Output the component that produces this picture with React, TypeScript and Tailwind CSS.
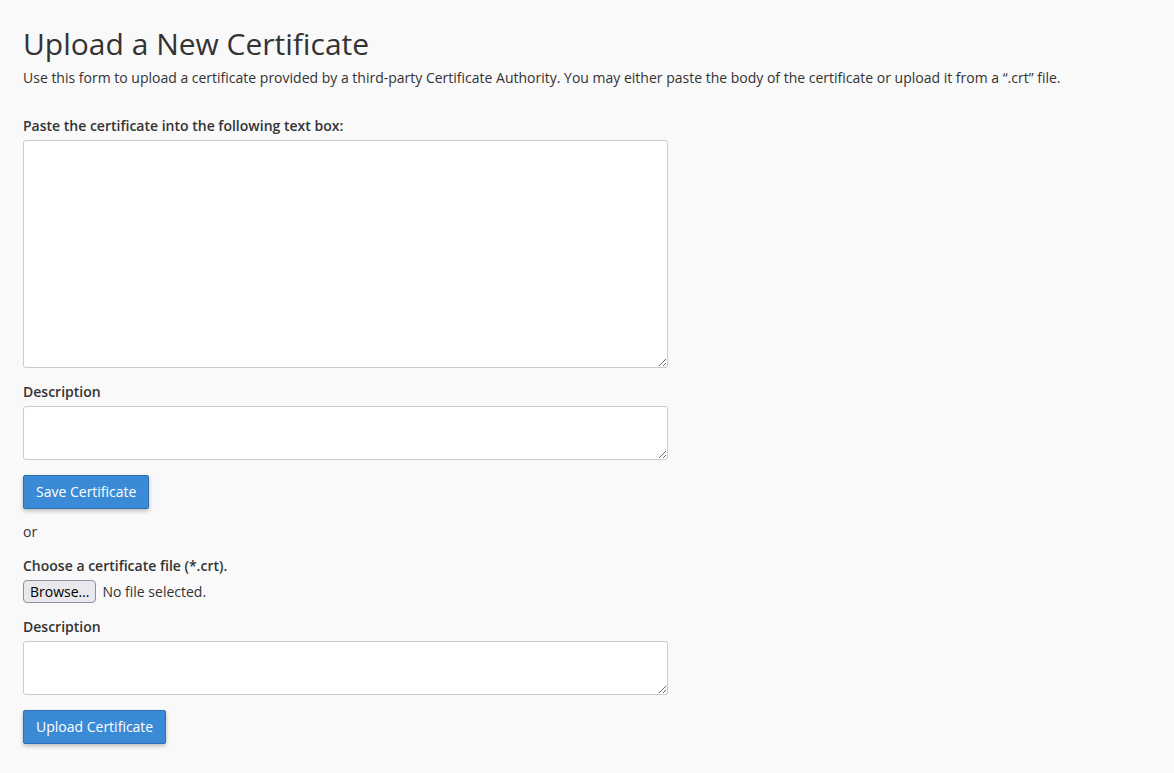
import React from "react";

const font = { fontFamily: '"Open Sans", "Noto Sans", sans-serif' };

function Label({ children }: { children: React.ReactNode }) {
  return <label className="block text-[14px] font-semibold text-[#333] leading-[20px] mb-[4px]">{children}</label>;
}

function PrimaryButton({ children }: { children: React.ReactNode }) {
  return (
    <button
      type="button"
      className="h-[34px] px-[12px] text-[14px] leading-[20px] pb-[1px] text-white bg-[#3a8ad6] border border-[#2c6fb2] rounded-[2px] shadow-[0_2px_4px_rgba(0,0,0,0.25)]"
    >
      {children}
    </button>
  );
}

export default function App() {
  return (
    <div className="min-h-screen bg-[#f9f9f9] text-[#333] px-[23px] pt-[24px] pb-[30px]" style={font}>
      <h1 className="text-[30px] leading-[40px] font-normal text-[#333]">Upload a New Certificate</h1>
      <p className="text-[14px] leading-[20px] mt-[4px]">
        Use this form to upload a certificate provided by a third-party Certificate Authority. You may either paste the body of the certificate or upload it from a “.crt” file.
      </p>

      <div className="mt-[28px] w-[645px]">
        <Label>Paste the certificate into the following text box:</Label>
        <textarea className="block w-[645px] h-[228px] bg-white border border-[#ccc] rounded-[3px] resize-y" />

        <div className="mt-[14px]">
          <Label>Description</Label>
          <textarea className="block w-[645px] h-[54px] bg-white border border-[#ccc] rounded-[3px] resize-y" />
        </div>

        <div className="mt-[15px]">
          <PrimaryButton>Save Certificate</PrimaryButton>
        </div>

        <p className="text-[14px] leading-[20px] mt-[13px]">or</p>

        <div className="mt-[14px]">
          <Label>Choose a certificate file (*.crt).</Label>
          <div className="flex items-center gap-[6px]">
            <button
              type="button"
              className="h-[23px] px-[6px] text-[14px] text-black bg-[#e9e9ed] border border-[#8f8f9d] rounded-[4px] leading-none"
            >
              Browse…
            </button>
            <span className="text-[14px]">No file selected.</span>
          </div>
        </div>

        <div className="mt-[14px]">
          <Label>Description</Label>
          <textarea className="block w-[645px] h-[54px] bg-white border border-[#ccc] rounded-[3px] resize-y" />
        </div>

        <div className="mt-[15px]">
          <PrimaryButton>Upload Certificate</PrimaryButton>
        </div>
      </div>
    </div>
  );
}
